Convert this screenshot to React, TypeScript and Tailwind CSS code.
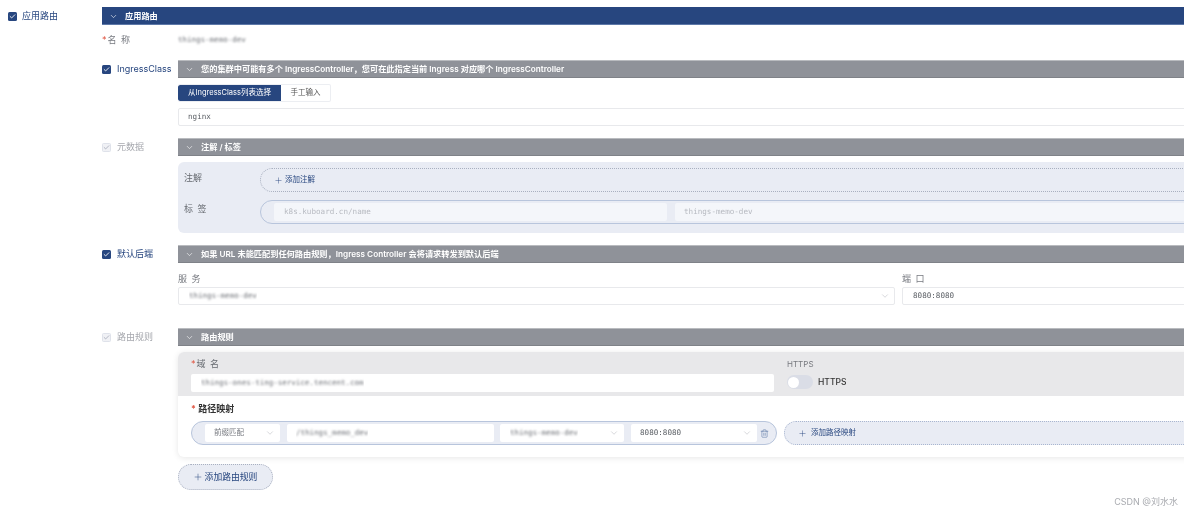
import React from "react";
import { Check, ChevronDown, Plus, Trash2 } from "lucide-react";

const Box = ({ off }: { off?: boolean }) => (
  <span className={`flex h-[9px] w-[9px] shrink-0 items-center justify-center rounded-[1.5px] ${off ? "border border-[#dfe2ea] bg-[#f0f1f5] text-[#a9aebb]" : "bg-[#27467f] text-white"}`}>
    <Check size={7} strokeWidth={3} />
  </span>
);

const Bar = ({ text, dark }: { text: string; dark?: boolean }) => (
  <div className={`flex h-[18px] items-center pl-[7px] text-[8.2px] font-semibold leading-none text-white ${dark ? "border-b border-[#5d78a8] bg-[#27467f] pt-[1px]" : "border-t border-b border-t-[#b9bbbf] border-b-[#7f8288] bg-[#8f9299]"}`}>
    <ChevronDown size={9} strokeWidth={1.6} className="mr-[7px] shrink-0" />
    <span>{text}</span>
  </div>
);

const Side = ({ text, off }: { text: string; off?: boolean }) => (
  <div className={`flex h-[18px] w-[76px] shrink-0 items-center gap-[6px] text-[9px] ${off ? "text-[#a6a8ae]" : "text-[#27467f]"}`}>
    <Box off={off} />
    <span>{text}</span>
  </div>
);

const Field = ({ className, children, chevron }: { className: string; children?: React.ReactNode; chevron?: boolean }) => (
  <div className={`flex h-[18px] items-center justify-between rounded-[2px] bg-white leading-none ${className}`}>
    <span className="block truncate leading-[12px]">{children}</span>
    {chevron && <ChevronDown size={10} strokeWidth={1} className="shrink-0 text-[#a0a3aa]" />}
  </div>
);

const Blurred = ({ text }: { text: string }) => (
  <span className="block font-['DejaVu_Sans_Mono',monospace] text-[7.5px] leading-[12px] text-[#6f7278] blur-[0.8px]">{text}</span>
);

const mono = "font-['DejaVu_Sans_Mono',monospace] text-[7.6px] text-[#5c6066]";

export default function App() {
  return (
    <div className="relative flex h-[513px] w-[1184px] overflow-hidden bg-white pt-[7px] font-['Inter','Noto_Sans_CJK_SC',sans-serif] blur-[0.4px]">
      <div className="w-[102px] shrink-0 pl-[8px]">
        <div className="flex h-[18px] items-center gap-[5px] text-[9px] text-[#27467f]">
          <Box />
          <span>应用路由</span>
        </div>
      </div>

      <div className="w-[1120px] shrink-0">
        <Bar text="应用路由" dark />

        <div className="mt-[6px] flex h-[18px] items-center text-[9px] text-[#777a80]">
          <div className="w-[76px] shrink-0 tracking-[1px]"><span className="text-[#e0533f]">*</span>名 称</div>
          <Blurred text="things-memo-dev" />
        </div>

        <div className="mt-[11px] flex">
          <Side text="IngressClass" />
          <div className="min-w-0 flex-1">
            <Bar text="您的集群中可能有多个 IngressController，您可在此指定当前 Ingress 对应哪个 IngressController" />
            <div className="mt-[6px] flex h-[18px] w-[153px] overflow-hidden rounded-[2px] border-y border-r border-[#eceef2] text-[7.5px]">
              <div className="flex w-[103px] items-center justify-center rounded-l-[2px] bg-[#27467f] text-white">从IngressClass列表选择</div>
              <div className="flex flex-1 items-center justify-center text-[#555]">手工输入</div>
            </div>
            <Field className={`mt-[6px] border border-[#e8e9ec] px-[9px] ${mono}`}>nginx</Field>
          </div>
        </div>

        <div className="mt-[12px] flex">
          <Side text="元数据" off />
          <div className="min-w-0 flex-1">
            <Bar text="注解 / 标签" />
            <div className="mt-[6px] rounded-[6px] bg-[#e9ecf4] pb-[9px] pl-[6px] pt-[6px]">
              <div className="flex">
                <div className="w-[76px] shrink-0 pt-[3px] text-[9px] text-[#666a70]">注解</div>
                <div className="flex h-[24px] flex-1 items-center gap-[2px] rounded-l-[12px] border border-dotted border-[#a9b0c0] pl-[13px] text-[7.5px] text-[#27467f]">
                  <Plus size={9} strokeWidth={1.2} />
                  <span>添加注解</span>
                </div>
              </div>
              <div className="mt-[8px] flex">
                <div className="w-[76px] shrink-0 pt-[2px] text-[9px] tracking-[1px] text-[#666a70]">标 签</div>
                <div className="flex h-[24px] flex-1 items-center gap-[8px] rounded-l-[12px] border border-[#b8c5dc] pl-[13px]">
                  <div className={`flex h-[18px] w-[393px] items-center rounded-[2px] bg-[#f4f6fa] pl-[10px] ${mono} text-[#b7bac1]`}>k8s.kuboard.cn/name</div>
                  <div className={`flex h-[18px] flex-1 items-center rounded-[2px] bg-[#f4f6fa] pl-[9px] ${mono} text-[#b7bac1]`}>things-memo-dev</div>
                </div>
              </div>
            </div>
          </div>
        </div>

        <div className="mt-[12px] flex">
          <Side text="默认后端" />
          <div className="min-w-0 flex-1">
            <Bar text="如果 URL 未能匹配到任何路由规则，Ingress Controller 会将请求转发到默认后端" />
            <div className="flex gap-[7px] pt-[9px]">
              <div className="w-[717px] shrink-0">
                <div className="h-[15px] text-[9px] tracking-[1px] text-[#777a80]">服 务</div>
                <Field chevron className="border border-[#e8e9ec] pl-[10px] pr-[4px]"><Blurred text="things-memo-dev" /></Field>
              </div>
              <div className="flex-1">
                <div className="h-[15px] text-[9px] tracking-[1px] text-[#777a80]">端 口</div>
                <Field className={`border border-[#e8e9ec] pl-[10px] ${mono}`}>8080:8080</Field>
              </div>
            </div>
          </div>
        </div>

        <div className="mt-[23px] flex">
          <Side text="路由规则" off />
          <div className="min-w-0 flex-1">
            <Bar text="路由规则" />
            <div className="mt-[6px] h-[105px] rounded-[6px] bg-white shadow-[0_1px_6px_rgba(0,0,0,0.1)]">
              <div className="flex h-[44px] gap-[13px] rounded-t-[6px] bg-[#e8e8ea] pl-[13px] pt-[5px]">
                <div className="w-[583px] shrink-0">
                  <div className="h-[17px] text-[9px] tracking-[1px] text-[#666a70]"><span className="text-[#e0533f]">*</span>域 名</div>
                  <Field className="pl-[10px]"><Blurred text="things-ones-ting-service.tencent.com" /></Field>
                </div>
                <div>
                  <div className="h-[17px] pt-[1px] text-[8px] text-[#77797f]">HTTPS</div>
                  <div className="flex items-center gap-[5px] pt-[1px]">
                    <div className="flex h-[14px] w-[26px] items-center rounded-full bg-[#dadde6] pl-[1px]">
                      <div className="h-[11px] w-[11px] rounded-full bg-white" />
                    </div>
                    <span className="text-[8.5px] font-medium text-[#333]">HTTPS</span>
                  </div>
                </div>
              </div>
              <div className="pl-[13px] pt-[6px]">
                <div className="h-[19px] text-[9px] font-semibold text-[#333]"><span className="text-[#e0533f]">*</span> 路径映射</div>
                <div className="flex gap-[7px]">
                  <div className="flex h-[24px] w-[586px] shrink-0 items-center rounded-full border border-[#b8c5dc] bg-[#e9ecf4] pl-[13px]">
                    <Field chevron className="w-[75px] shrink-0 pl-[9px] pr-[5px] text-[7.5px] text-[#777a80]">前缀匹配</Field>
                    <Field className="ml-[7px] w-[207px] shrink-0 pl-[9px]"><Blurred text="/things_memo_dev" /></Field>
                    <Field chevron className="ml-[6px] w-[124px] shrink-0 pl-[10px] pr-[5px]"><Blurred text="things-memo-dev" /></Field>
                    <Field chevron className={`ml-[7px] w-[126px] shrink-0 pl-[9px] pr-[5px] ${mono}`}>8080:8080</Field>
                    <Trash2 size={9} strokeWidth={1.3} className="ml-[3px] shrink-0 text-[#44649a]" />
                  </div>
                  <div className="flex h-[24px] flex-1 items-center gap-[4px] rounded-l-[12px] border border-dotted border-[#a9b6d0] bg-[#e9ecf4] pl-[13px] text-[7.5px] text-[#27467f]">
                    <Plus size={9} strokeWidth={1.2} />
                    <span>添加路径映射</span>
                  </div>
                </div>
              </div>
            </div>
            <div className="mt-[7px] flex h-[26px] w-[95px] items-center justify-center gap-[2px] rounded-full border border-dotted border-[#a9b0c0] bg-[#e9ecf4] pr-[1px] text-[8.8px] text-[#27467f]">
              <Plus size={10} strokeWidth={1.2} />
              <span>添加路由规则</span>
            </div>
          </div>
        </div>
      </div>

      <div className="absolute bottom-[5px] right-[6px] text-[9px] text-[#a9abb0]">CSDN @刘水水</div>
    </div>
  );
}
